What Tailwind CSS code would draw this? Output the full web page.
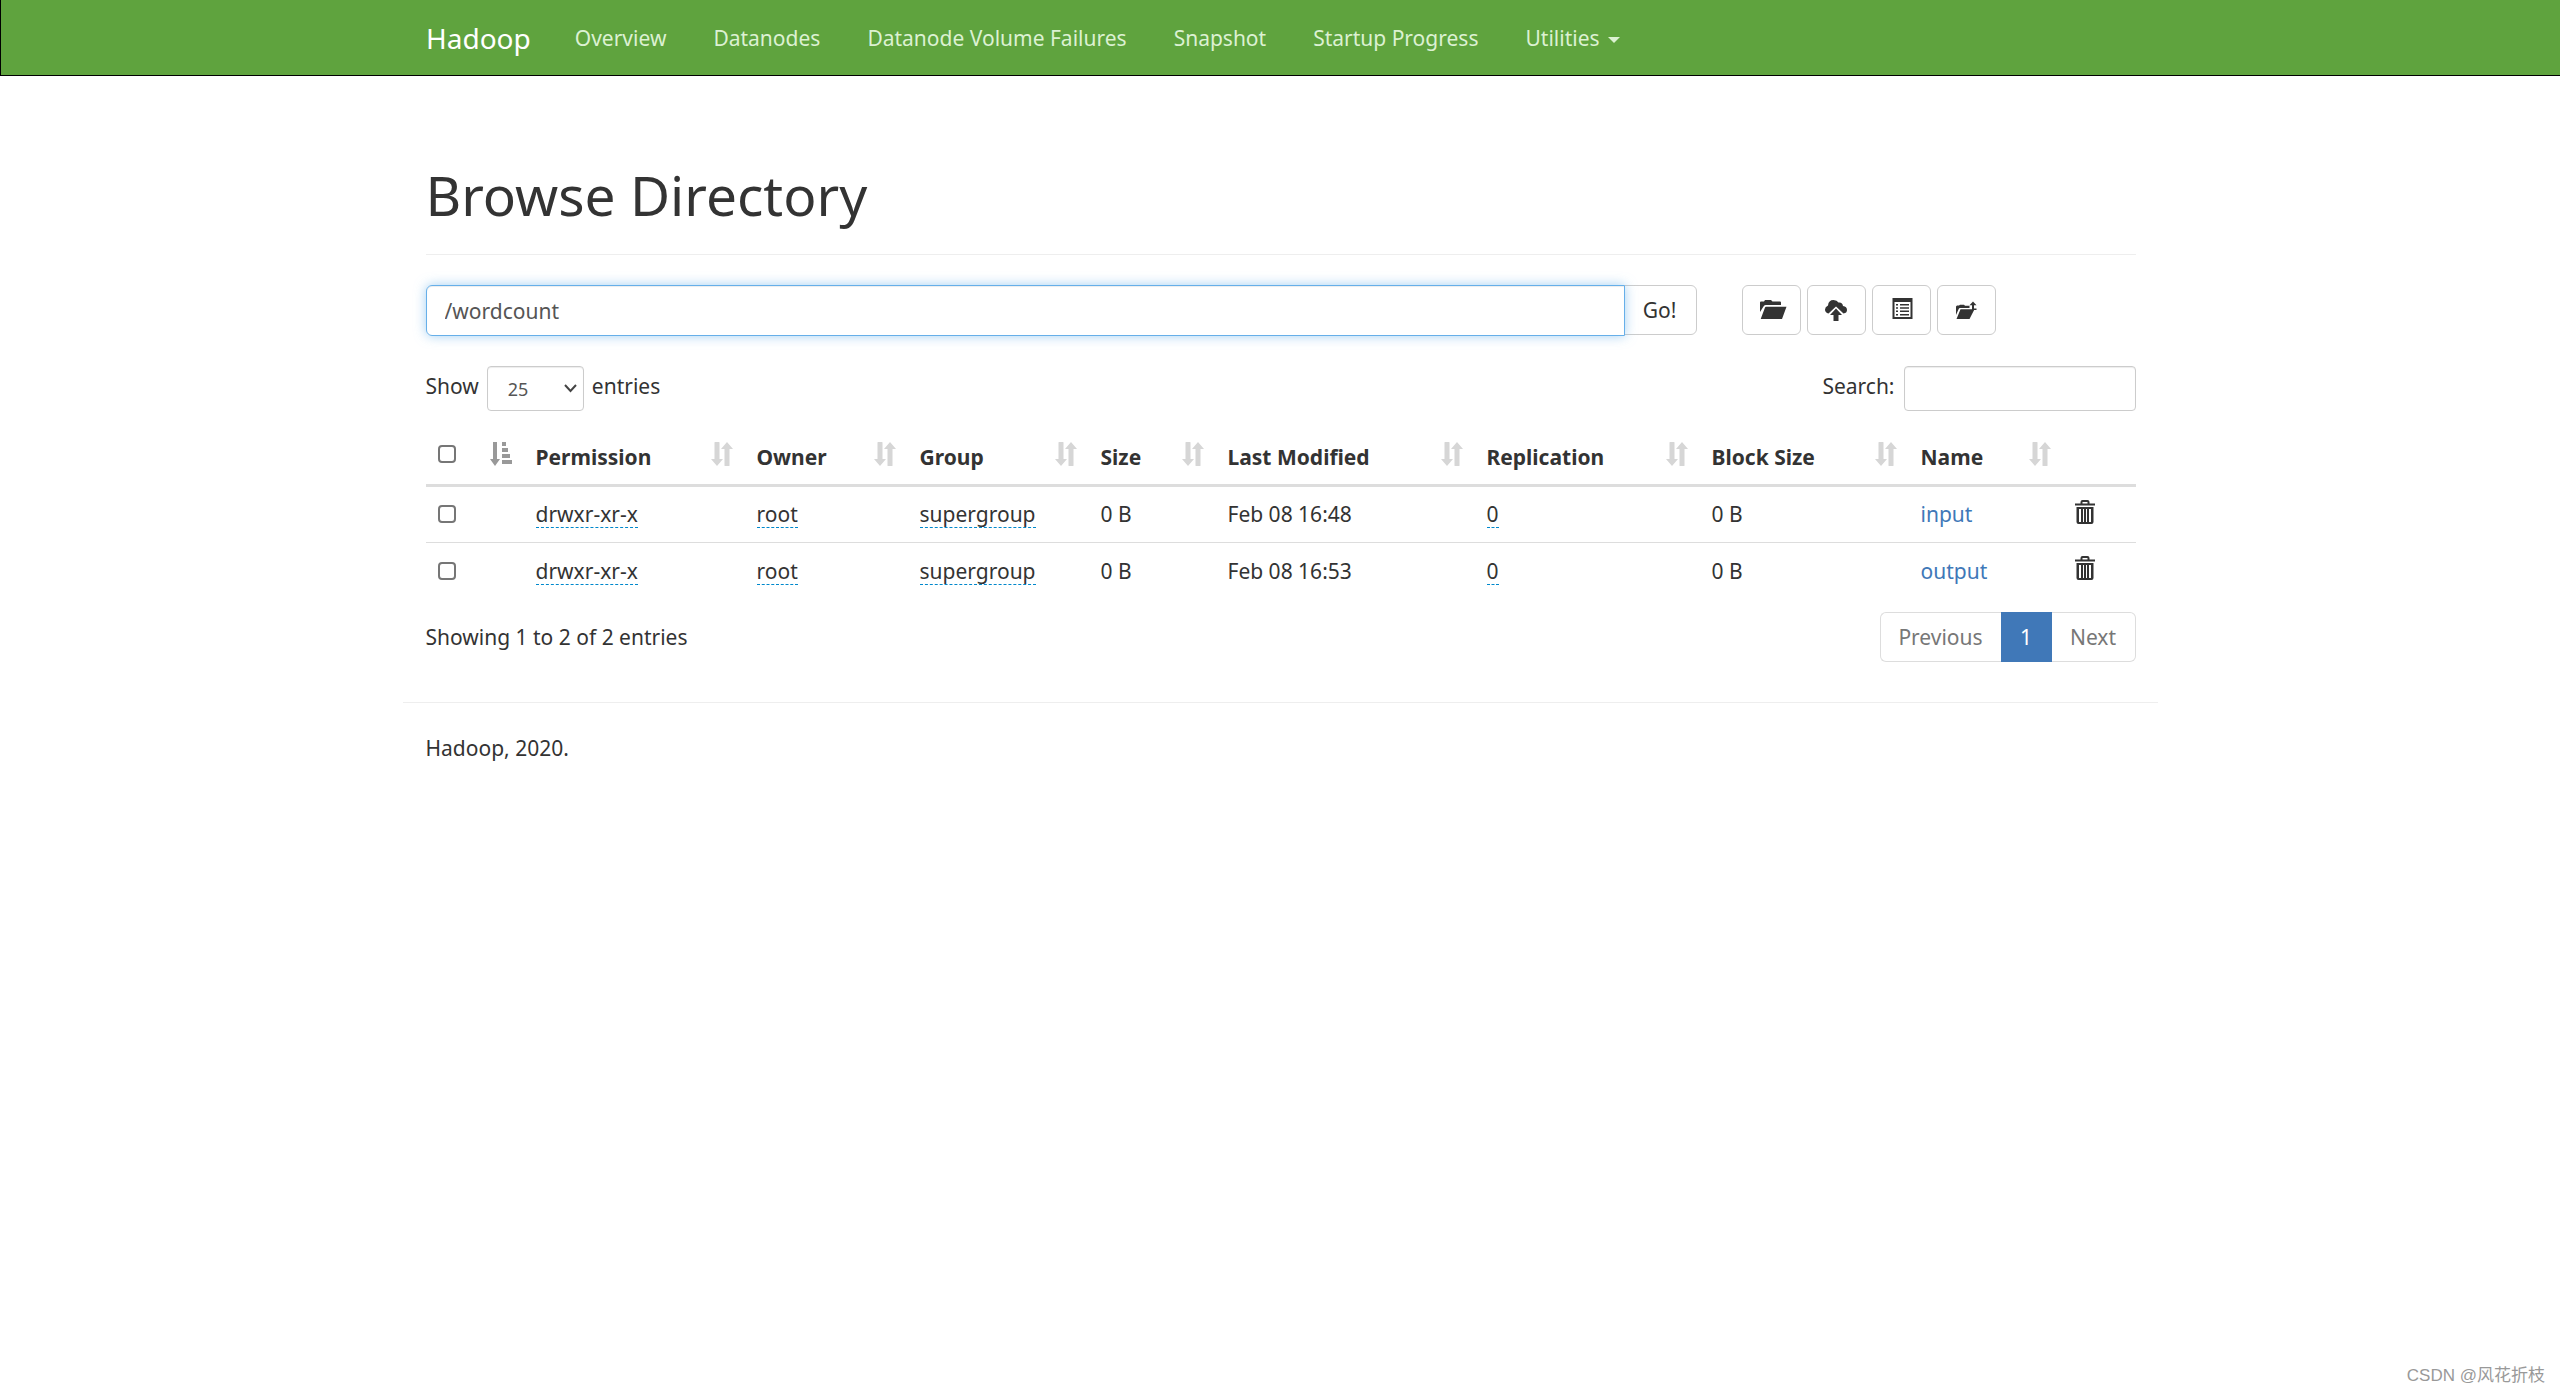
<!DOCTYPE html>
<html lang="en">
<head>
<meta charset="utf-8">
<title>Browsing HDFS</title>
<script src="https://cdn.jsdelivr.net/npm/@tailwindcss/browser@4"></script>
</head>
<body class="relative min-h-screen bg-white font-['Noto_Sans','Noto_Sans_CJK_SC',sans-serif] text-[21px] leading-[30px] text-[#333]">
<svg class="hidden" aria-hidden="true">
  <symbol id="sort" viewBox="0 0 22 24"><path d="M4 0h4q.5 0 .5.500V17H12L6 24 0 17h3.500V.5Q3.500 0 4 0zM14 24q-.5 0-.5-.500V7H10l6-7 6 7h-3.500v16.500q0 .5-.5.5z"/></symbol>
  <symbol id="sort-asc" viewBox="0 0 22 24"><path d="M3 0h4v17h3l-5 7-5-7h3zM12 0h4v4h-4zM12 6h6v4h-6zM12 12h8v4h-8zM12 18h10v4H12z"/></symbol>
  <symbol id="trash" viewBox="0 0 20 24"><path fill-rule="evenodd" d="M5.500 3.500V2q0-2 2-2h5q2 0 2 2v1.500H20v2H0v-2zM7.500 3.500h5V2h-5zM1.500 7h17v15q0 2-2 2h-13q-2 0-2-2zM4 9v13h2V9zm4 0v13h1V9zm3 0v13h1V9zm3 0v13h2V9z"/></symbol>
</svg>

<nav class="border-b border-l border-black bg-[#5fa33e]">
  <div class="mx-auto flex h-[75px] max-w-[1755px] items-center gap-[44px] px-[23px] text-[#dcf1d2]">
    <a href="#" class="text-[28px] text-white">Hadoop</a>
    <div class="flex items-center gap-[47px]">
      <a href="#">Overview</a>
      <a href="#">Datanodes</a>
      <a href="#">Datanode Volume Failures</a>
      <a href="#">Snapshot</a>
      <a href="#">Startup Progress</a>
      <a href="#" class="flex items-center gap-2">Utilities
        <svg class="mt-1 h-[6px] w-[12px]" viewBox="0 0 12 6" fill="currentColor"><path d="M0 0h12L6 6z"/></svg></a>
    </div>
  </div>
</nav>

<main class="mx-auto max-w-[1757px] pr-[23px] pl-[24px]">
  <header class="mt-[84px] border-b border-[#eee] pb-[24px]">
    <h1 class="text-[55px] leading-[70px]">Browse Directory</h1>
  </header>

  <div class="mt-[30px] flex items-start">
    <form class="flex w-[1271px]">
      <input aria-label="Directory" value="/wordcount" class="relative h-[51px] min-w-0 grow rounded-l-md border border-[#66afe9] px-[18px] text-[#555] shadow-[inset_0_1px_1px_rgba(0,0,0,.075),0_0_12px_rgba(102,175,233,.6)] outline-none">
      <button type="button" class="-ml-px h-[50px] w-[73px] rounded-r-md border border-[#ccc] pr-px">Go!</button>
    </form>
    <div class="ml-[45px] flex gap-[6px]">
      <button type="button" aria-label="Create directory" class="flex h-[50px] w-[59px] items-center justify-center rounded-md border border-[#ccc]">
        <svg class="h-[22px] w-[22px] overflow-visible" viewBox="0 0 22 22" fill="currentColor"><path d="M0 13V3.500Q0 2.500 1 2.500h3L5 1h6l1.500 1.500H20q1 0 1 1v2.500H5.500Q4 6 3.500 7.500zM6 7.700h20.500L22 20H.7L5 8.500q.3-.8 1-.8z"/></svg></button>
      <button type="button" aria-label="Upload files" class="flex h-[50px] w-[59px] items-center justify-center rounded-md border border-[#ccc]">
        <svg class="h-[22px] w-[22px] overflow-visible" viewBox="0 0 22 22" fill="currentColor"><path d="M3.500 14.500Q0 13.500 0 10.500 0 8 3 6.500 3.500 1 8.500 1q3.500 0 5 2.500 4-.5 4.500 3.500 4 .5 4 4 0 3-3.500 3.500L11 7.500zM11 9.500l6 6.500h-3.500v6h-5v-6H5z"/></svg></button>
      <button type="button" aria-label="Cut and paste" class="flex h-[50px] w-[59px] items-center justify-center rounded-md border border-[#ccc]">
        <svg class="h-[22px] w-[22px] overflow-visible" viewBox="0 0 22 22" fill="currentColor"><path fill-rule="evenodd" d="M2.500-1h20v21h-20zM4.500 3v15h16V3zM6 5h2v1.500H6zm4 0h9v1.500h-9zM6 8.300h2v1.500H6zm4 0h9v1.500h-9zM6 11.600h2v1.500H6zm4 0h9v1.500h-9zM6 15h2v1.500H6zm4 0h9v1.500h-9z"/></svg></button>
      <button type="button" aria-label="Parent directory" class="flex h-[50px] w-[59px] items-center justify-center rounded-md border border-[#ccc]">
        <svg class="h-[22px] w-[22px] overflow-visible" viewBox="0 0 22 22" fill="currentColor"><path d="M1 16V7.500L2 6.500h2l1-.8h4l1 1h4.500v2.300H5Q4 9 3.700 10zM5.500 10.300H19.500L14.500 20H1.500zM18 2.500l3.500 3.800H19V9.500h2.500V11H17V6.300h-2.500z"/></svg></button>
    </div>
  </div>

  <div class="mt-[30px] flex items-start justify-between">
    <div class="flex gap-[8px]">
      <label for="length" class="mt-[5px]">Show</label>
      <span class="relative">
        <select id="length" class="h-[45px] w-[97px] appearance-none rounded border border-[#ccc] px-[20px] text-[18px] text-[#555] shadow-[inset_0_1px_1px_rgba(0,0,0,.075)]"><option>25</option></select>
        <svg class="pointer-events-none absolute top-[18px] right-[7px] h-[9px] w-[13px]" viewBox="0 0 13 9" fill="none" stroke="#444" stroke-width="2"><path d="M1 1l5.500 6L12 1"/></svg>
      </span>
      <span class="mt-[5px]">entries</span>
    </div>
    <div class="flex gap-[9px]">
      <label for="search" class="mt-[5px]">Search:</label>
      <input id="search" type="search" class="h-[45px] w-[232px] rounded border border-[#ccc] px-[15px] shadow-[inset_0_1px_1px_rgba(0,0,0,.075)]">
    </div>
  </div>

  <table class="mt-[17px] w-full table-fixed text-left">
    <colgroup><col class="w-[98px]"><col class="w-[221px]"><col class="w-[163px]"><col class="w-[181px]"><col class="w-[127px]"><col class="w-[259px]"><col class="w-[225px]"><col class="w-[209px]"><col class="w-[154px]"><col></colgroup>
    <thead>
      <tr class="h-[57px] border-b-3 border-[#ddd]">
        <th class="px-[12px]"><div class="flex items-center justify-between pb-[4px]"><input type="checkbox" aria-label="Select all" class="h-[18px] w-[18px] appearance-none rounded-[4px] border-2 border-[#767676]"><svg class="h-[24px] w-[22px] fill-[#999]"><use href="#sort-asc"/></svg></div></th>
        <th class="px-[12px] font-bold"><div class="flex items-center justify-between pt-[2px]">Permission<svg class="mb-[6px] h-[24px] w-[22px] fill-[#d6d6d6]"><use href="#sort"/></svg></div></th>
        <th class="px-[12px] font-bold"><div class="flex items-center justify-between pt-[2px]">Owner<svg class="mb-[6px] h-[24px] w-[22px] fill-[#d6d6d6]"><use href="#sort"/></svg></div></th>
        <th class="px-[12px] font-bold"><div class="flex items-center justify-between pt-[2px]">Group<svg class="mb-[6px] h-[24px] w-[22px] fill-[#d6d6d6]"><use href="#sort"/></svg></div></th>
        <th class="px-[12px] font-bold"><div class="flex items-center justify-between pt-[2px]">Size<svg class="mb-[6px] h-[24px] w-[22px] fill-[#d6d6d6]"><use href="#sort"/></svg></div></th>
        <th class="px-[12px] font-bold"><div class="flex items-center justify-between pt-[2px]">Last Modified<svg class="mb-[6px] h-[24px] w-[22px] fill-[#d6d6d6]"><use href="#sort"/></svg></div></th>
        <th class="px-[12px] font-bold"><div class="flex items-center justify-between pt-[2px]">Replication<svg class="mb-[6px] h-[24px] w-[22px] fill-[#d6d6d6]"><use href="#sort"/></svg></div></th>
        <th class="px-[12px] font-bold"><div class="flex items-center justify-between pt-[2px]">Block Size<svg class="mb-[6px] h-[24px] w-[22px] fill-[#d6d6d6]"><use href="#sort"/></svg></div></th>
        <th class="px-[12px] font-bold"><div class="flex items-center justify-between pt-[2px]">Name<svg class="mb-[6px] h-[24px] w-[22px] fill-[#d6d6d6]"><use href="#sort"/></svg></div></th>
        <th></th>
      </tr>
    </thead>
    <tbody>
      <tr class="h-[57px] border-b border-[#ddd]">
        <td class="px-[12px]"><input type="checkbox" aria-label="Select input" class="block h-[18px] w-[18px] appearance-none rounded-[4px] border-2 border-[#767676]"></td>
        <td class="px-[12px]"><a href="#" class="inline-block border-b border-dashed border-[#0088cc] leading-[26px]">drwxr-xr-x</a></td>
        <td class="px-[12px]"><a href="#" class="inline-block border-b border-dashed border-[#0088cc] leading-[26px]">root</a></td>
        <td class="px-[12px]"><a href="#" class="inline-block border-b border-dashed border-[#0088cc] leading-[26px]">supergroup</a></td>
        <td class="px-[12px]">0 B</td>
        <td class="px-[12px]">Feb 08 16:48</td>
        <td class="px-[12px]"><a href="#" class="inline-block border-b border-dashed border-[#0088cc] leading-[26px]">0</a></td>
        <td class="px-[12px]">0 B</td>
        <td class="px-[12px]"><a href="#" class="text-[#4078b8]">input</a></td>
        <td class="px-[12px]"><button type="button" aria-label="Delete input" class="block"><svg class="mb-[5px] h-[24px] w-[20px] fill-[#333]"><use href="#trash"/></svg></button></td>
      </tr>
      <tr class="h-[57px]">
        <td class="px-[12px]"><input type="checkbox" aria-label="Select output" class="block h-[18px] w-[18px] appearance-none rounded-[4px] border-2 border-[#767676]"></td>
        <td class="px-[12px]"><a href="#" class="inline-block border-b border-dashed border-[#0088cc] leading-[26px]">drwxr-xr-x</a></td>
        <td class="px-[12px]"><a href="#" class="inline-block border-b border-dashed border-[#0088cc] leading-[26px]">root</a></td>
        <td class="px-[12px]"><a href="#" class="inline-block border-b border-dashed border-[#0088cc] leading-[26px]">supergroup</a></td>
        <td class="px-[12px]">0 B</td>
        <td class="px-[12px]">Feb 08 16:53</td>
        <td class="px-[12px]"><a href="#" class="inline-block border-b border-dashed border-[#0088cc] leading-[26px]">0</a></td>
        <td class="px-[12px]">0 B</td>
        <td class="px-[12px]"><a href="#" class="text-[#4078b8]">output</a></td>
        <td class="px-[12px]"><button type="button" aria-label="Delete output" class="block"><svg class="mb-[5px] h-[24px] w-[20px] fill-[#333]"><use href="#trash"/></svg></button></td>
      </tr>
    </tbody>
  </table>

  <div class="mt-[13px] flex items-center justify-between">
    <p>Showing 1 to 2 of 2 entries</p>
    <div class="flex h-[50px] w-[256px]">
      <a href="#" class="flex w-[121px] items-center justify-center rounded-l-md border border-r-0 border-[#ddd] text-[#777]">Previous</a>
      <a href="#" class="flex w-[51px] items-center justify-center bg-[#4078b8] text-white">1</a>
      <a href="#" class="flex grow items-center justify-center rounded-r-md border border-l-0 border-[#ddd] text-[#777]">Next</a>
    </div>
  </div>
</main>

<footer class="mx-auto mt-[40px] max-w-[1755px] border-t border-[#eee] px-[23px] pt-[30px]">
  <p>Hadoop, 2020.</p>
</footer>

<p class="absolute right-[15px] bottom-[4px] font-['Liberation_Sans','Noto_Sans_CJK_SC',sans-serif] text-[17px] text-[#999]">CSDN @风花折枝</p>
</body>
</html>
